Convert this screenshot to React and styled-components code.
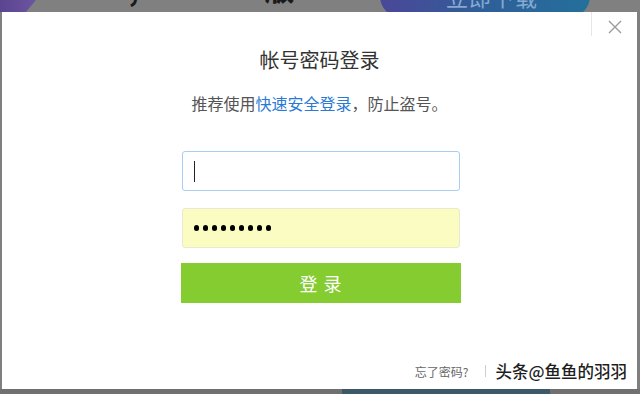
import React from "react";
import styled, { createGlobalStyle } from "styled-components";

const Global = createGlobalStyle`
  html, body { margin: 0; padding: 0; }
  body { font-family: "Noto Sans CJK SC", "Noto Sans", sans-serif; background: #7f7f7f; }
`;

const Page = styled.div`
  width: 640px;
  height: 394px;
  overflow: hidden;
  display: flex;
  flex-direction: column;
  background: #7f7f7f;
`;

const TopStrip = styled.div`
  height: 12px;
  flex-shrink: 0;
  display: flex;
  align-items: flex-start;
  overflow: hidden;
  background: #808080;
`;

const Corner = styled.div`
  width: 36px;
  height: 12px;
  flex-shrink: 0;
  background: linear-gradient(90deg, #5b4590, #6d55a0);
  clip-path: polygon(0 0, 100% 0, 72% 100%, 0 100%);
`;

const Headline = styled.div`
  margin-top: -31px;
  margin-left: ${(p) => p.$ml}px;
  font-size: 30px;
  line-height: 36px;
  color: #1a1a1a;
  font-weight: 700;
  white-space: nowrap;
`;

const Pill = styled.div`
  margin-left: auto;
  margin-right: 50px;
  margin-top: -26px;
  width: 210px;
  height: 44px;
  flex-shrink: 0;
  border-radius: 22px;
  background: linear-gradient(90deg, #4b4798, #2f5f98 50%, #23709c);
  display: flex;
  align-items: center;
  justify-content: center;
  padding-left: 14px;
  box-sizing: border-box;
  color: #86a9cf;
  font-size: 22px;
  letter-spacing: 1px;
`;

const Dialog = styled.div`
  height: 377px;
  flex-shrink: 0;
  margin: 0 3px 0 2px;
  background: #fff;
  display: flex;
  flex-direction: column;
`;

const TopBar = styled.div`
  height: 30px;
  display: flex;
  justify-content: flex-end;
  align-items: flex-start;
`;

const Divider = styled.div`
  width: 1px;
  height: 24px;
  background: #e6e6e6;
`;

const Close = styled.button`
  width: 45px;
  height: 30px;
  border: none;
  background: transparent;
  padding: 0;
  display: flex;
  align-items: center;
  justify-content: center;
  cursor: pointer;
`;

const Body = styled.div`
  display: flex;
  flex-direction: column;
  align-items: center;
`;

const Title = styled.h1`
  margin: 3px 0 0;
  font-size: 20px;
  line-height: 30px;
  font-weight: 400;
  color: #333;
`;

const Sub = styled.p`
  margin: 16px 0 0;
  font-size: 16px;
  line-height: 24px;
  color: #555;
`;

const Link = styled.a`
  color: #2a79d4;
  text-decoration: none;
`;

const Form = styled.div`
  margin-top: 36px;
  margin-left: 2px;
  width: 280px;
  display: flex;
  flex-direction: column;
  align-items: center;
`;

const Field = styled.div`
  box-sizing: border-box;
  width: 278px;
  height: 40px;
  margin-bottom: ${(p) => p.$mb}px;
  border: 1px solid ${(p) => (p.$filled ? "#e9e9cf" : "#a7cdf2")};
  border-radius: 3px;
  background: ${(p) => (p.$filled ? "#fafcc2" : "#fff")};
  display: flex;
  align-items: center;
  padding-left: 11px;
  gap: 3.9px;
`;

const Caret = styled.span`
  width: 1px;
  height: 21px;
  background: #222;
`;

const Dot = styled.span`
  width: 5.2px;
  height: 5.2px;
  border-radius: 50%;
  background: #000;
`;

const Submit = styled.button`
  width: 280px;
  height: 40px;
  border: none;
  border-radius: 0;
  background: #84cc2f;
  color: #fff;
  font-family: inherit;
  font-size: 18px;
  letter-spacing: 6px;
  text-indent: 6px;
  cursor: pointer;
`;

const Footer = styled.div`
  margin-top: auto;
  height: 34px;
  display: flex;
  align-items: center;
  justify-content: flex-end;
  padding-right: 10px;
  padding-bottom: 1px;
`;

const Forgot = styled.a`
  font-size: 12px;
  color: #666;
  text-decoration: none;
`;

const Sep = styled.span`
  width: 1px;
  height: 12px;
  background: #cfcfcf;
  margin: 0 9px 0 17px;
`;

const Watermark = styled.span`
  font-size: 16.5px;
  font-weight: 500;
  color: #1e1e1e;
  text-shadow: 1px 0 #fff, -1px 0 #fff, 0 1px #fff, 0 -1px #fff;
  white-space: nowrap;
`;

const BottomStrip = styled.div`
  flex: 1;
  display: flex;
  background: #707070;
`;

const Patch = styled.div`
  margin-left: 342px;
  width: 208px;
  background: #3d5866;
`;

export default function App() {
  const dots = Array.from({ length: 9 });
  return (
    <>
      <Global />
      <Page>
        <TopStrip>
          <Corner />
          <Headline $ml={56}>一 ,</Headline>
          <Headline $ml={96}>一版</Headline>
          <Pill>立即下载</Pill>
        </TopStrip>
        <Dialog>
          <TopBar>
            <Divider />
            <Close aria-label="关闭">
              <svg width="14" height="14" viewBox="0 0 14 14">
                <path d="M1 1 L13 13 M13 1 L1 13" stroke="#9a9a9a" strokeWidth="1.4" fill="none" />
              </svg>
            </Close>
          </TopBar>
          <Body>
            <Title>帐号密码登录</Title>
            <Sub>
              推荐使用<Link href="#">快速安全登录</Link>，防止盗号。
            </Sub>
            <Form>
              <Field $mb={17}>
                <Caret />
              </Field>
              <Field $filled $mb={15}>
                {dots.map((_, i) => (
                  <Dot key={i} />
                ))}
              </Field>
              <Submit>登录</Submit>
            </Form>
          </Body>
          <Footer>
            <Forgot href="#">忘了密码?</Forgot>
            <Sep />
            <Watermark>头条@鱼鱼的羽羽</Watermark>
          </Footer>
        </Dialog>
        <BottomStrip>
          <Patch />
        </BottomStrip>
      </Page>
    </>
  );
}
